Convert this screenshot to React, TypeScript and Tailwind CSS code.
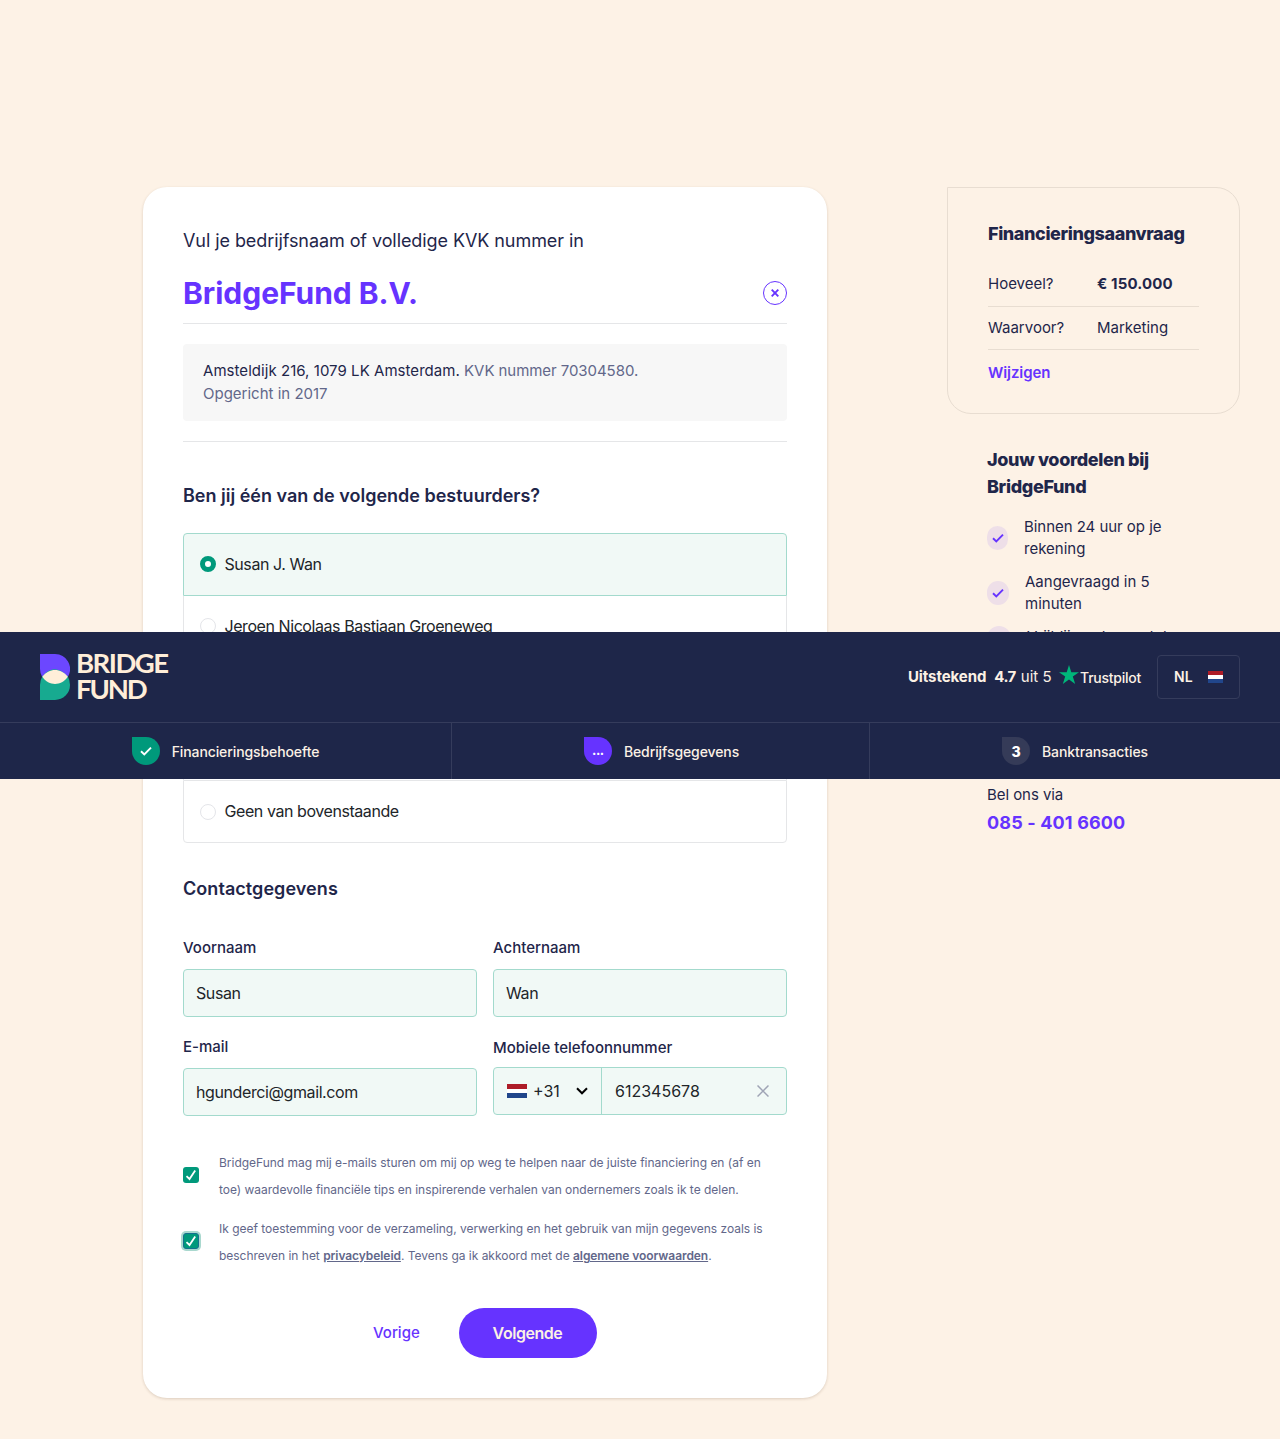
import { type ReactNode } from "react";
import clsx from "clsx";

function T({ c, children }: { c?: string; children: ReactNode }) {
  return <span className={clsx("whitespace-nowrap", c)}>{children}</span>;
}

function Tick({ c }: { c: string }) {
  return (
    <svg viewBox="0 0 12 10" className={c} fill="none" stroke="currentColor" strokeWidth="1.9">
      <path d="M1 5.2 4.3 8.4 11 1.6" />
    </svg>
  );
}

function Flag({ c }: { c: string }) {
  return (
    <span className={clsx("flex flex-col bg-white", c)}>
      <span className="flex-1 bg-[#ae1c28]" />
      <span className="flex-1" />
      <span className="flex-1 bg-[#21468b]" />
    </span>
  );
}

function Logo() {
  return (
    <div className="flex items-start gap-[6px]">
      <svg width="30" height="46" viewBox="0 0 30 46" className="mt-[22px]">
        <path d="M0 0H15A15 15 0 0 1 28 22.500Q14 38 2 22.500Q0 19 0 15Z" fill="#6c47ff" />
        <path d="M0 46V31Q0 26 2.300 22.500Q14 8 27.800 22.500Q30 26 30 31A15 15 0 0 1 15 46Z" fill="#17aa90" />
        <path d="M2.300 22.700C9 13.700 21 13.700 27.800 22.700C21 32.300 9 32.300 2.300 22.700Z" fill="#ffeed9" />
      </svg>
      <div className="mt-[18px] flex flex-col font-['Lato'] text-[27.500px] font-bold leading-[26px] text-[#ffeed9]">
        <T c="tracking-[-1.500px]">BRIDGE</T>
        <T c="tracking-[-2.100px]">FUND</T>
      </div>
    </div>
  );
}

function Step({ c, drop, mark, children }: { c: string; drop: string; mark: ReactNode; children: ReactNode }) {
  return (
    <div className={clsx("flex h-full items-start justify-center pt-[14px]", c)}>
      <div className={clsx("flex size-7 items-center justify-center rounded-full rounded-tl-none text-white", drop)}>{mark}</div>
      <div className="ml-3 pt-[4px] text-[14px] font-medium leading-[21px] tracking-[-0.1px] text-[#fcf1e5]"><T>{children}</T></div>
    </div>
  );
}

function Header() {
  return (
    <header className="fixed inset-x-0 top-[632px] z-10 h-[147px] bg-[#1e2649]">
      <div className="flex h-[90px] justify-between px-10">
        <Logo />
        <div className="flex items-start pt-[23px] text-[15px] leading-[22px] text-[#fcf1e5]">
          <div className="mt-[11px] flex">
            <T c="font-bold tracking-[-0.08px]">Uitstekend</T>
            <T c="ml-2 font-bold tracking-[-0.5px]">4.7</T>
            <T c="ml-[5px]">uit 5</T>
            <svg width="20" height="19" viewBox="0 0 20 19" className="-mt-px ml-[7.500px]">
              <path d="M10 0l2.300 7.200H20l-6.200 4.400L16.200 19 10 14.400 3.800 19l2.400-7.400L0 7.200h7.700z" fill="#00b67a" />
            </svg>
            <T c="ml-[1px] pt-px text-[14px] font-medium tracking-[-0.250px]">Trustpilot</T>
          </div>
          <div className="ml-4 flex h-11 w-[83px] items-center justify-between rounded border border-[#353c5c] px-4">
            <T c="text-[14px] font-semibold">NL</T>
            <Flag c="h-3 w-[15px]" />
          </div>
        </div>
      </div>
      <div className="flex h-[57px] border-t border-[#353c5c]">
        <Step c="w-[452px] border-r border-[#353c5c]" drop="bg-[#00997b]" mark={<Tick c="h-[10px] w-3" />}>Financieringsbehoefte</Step>
        <Step c="w-[418px] border-r border-[#353c5c] pl-[2px] tracking-[-0.15px]" drop="bg-[#6633ff]" mark={<span className="text-[13px] font-bold tracking-[-0.4px]">...</span>}>Bedrijfsgegevens</Step>
        <Step c="w-[410px]" drop="bg-[#353b58]" mark={<span className="text-[14px] font-extrabold">3</span>}>Banktransacties</Step>
      </div>
    </header>
  );
}

function Radio({ on }: { on?: boolean }) {
  return <span className={clsx("size-4 shrink-0 rounded-full bg-white", on ? "border-[5px] border-[#00997b]" : "border border-[#e4e5e9]")} />;
}

function Option({ on, c, t, children }: { on?: boolean; c: string; t?: string; children: ReactNode }) {
  return (
    <div className={clsx("flex items-center gap-[8.500px] px-4 text-[16px] leading-6 tracking-[-0.430px] text-[#212529]", c)}>
      <Radio on={on} />
      <T c={t}>{children}</T>
    </div>
  );
}

const field = "flex h-12 items-center rounded border border-[#a3dacd] bg-[#f1f9f6] text-[16px] leading-6 text-[#212529]";

function Field({ label, value }: { label: string; value: string }) {
  return (
    <label className="flex flex-col">
      <span className="mb-[10px] text-[15px] font-medium leading-[22px] text-[#1f264a]"><T>{label}</T></span>
      <span className={clsx(field, "px-3 tracking-[-0.4px]")}><T>{value}</T></span>
    </label>
  );
}

function Check({ focus }: { focus?: boolean }) {
  return (
    <span className={clsx("mt-[18px] flex size-4 shrink-0 items-center justify-center rounded-[3px] bg-[#00997b] text-white", focus && "border border-[#16708f] ring-2 ring-[#a9d8ce]")}>
      <svg width="12" height="12" viewBox="0 0 12 12" className="shrink-0" fill="none" stroke="currentColor" strokeWidth="1.800">
        <path d="M1.500 7.200 4.500 10 10.200 1.500" />
      </svg>
    </span>
  );
}

function Card() {
  return (
    <main className="h-[1211px] w-[684px] rounded-[24px] bg-white px-10 pt-10 text-[#1f264a] shadow-[0_1px_3px_rgba(90,60,30,0.2)]">
      <div className="text-[18px] leading-[27px] tracking-[-0.075px]"><T>Vul je bedrijfsnaam of volledige KVK nummer in</T></div>
      <div className="flex h-[70px] items-center justify-between border-b border-[#e5e6e8] pt-[9px]">
        <h1 className="-mt-px text-[30px] font-bold leading-[38px] tracking-[-0.030px] text-[#6633ff]"><T>BridgeFund B.V.</T></h1>
        <span className="flex size-6 items-center justify-center rounded-full border border-[#6633ff] text-[#6633ff]">
          <svg width="8" height="8" viewBox="0 0 8 8" stroke="currentColor" strokeWidth="1.900"><path d="M.7.7 7.300 7.300M7.300.7.7 7.300" /></svg>
        </span>
      </div>
      <div className="mt-5 h-[77px] rounded bg-[#f7f7f7] px-5 pt-[15px] text-[15px] leading-[23px] text-[#62678a]">
        <div><T c="tracking-[0.045px] text-[#1f264a]">Amsteldijk 216, 1079 LK Amsterdam.</T> <T c="tracking-[-0.060px]">KVK nummer 70304580.</T></div>
        <div><T>Opgericht in 2017</T></div>
      </div>
      <div className="mt-5 border-t border-[#e5e6e8] pt-10">
        <h2 className="text-[18px] font-semibold leading-[27px]"><T>Ben jij één van de volgende bestuurders?</T></h2>
      </div>
      <div className="mt-6">
        <Option on c="h-[63px] rounded-t border border-[#a3dacd] bg-[#f1f9f6] pb-px">Susan J. Wan</Option>
        <Option c="h-[61px] border-x border-b border-[#e5e6e8]">Jeroen Nicolaas Bastiaan Groeneweg</Option>
        <div className="h-[123px] border-x border-[#e5e6e8]" />
        <Option c="h-[63px] rounded-b border border-[#e5e6e8]" t="pb-px">Geen van bovenstaande</Option>
      </div>
      <h2 className="mt-8 text-[18px] font-semibold leading-[27px] tracking-[0.060px]"><T>Contactgegevens</T></h2>
      <div className="mt-[35px] grid grid-cols-2 gap-x-4 gap-y-[19px]">
        <Field label="Voornaam" value="Susan" />
        <Field label="Achternaam" value="Wan" />
        <Field label="E-mail" value="hgunderci@gmail.com" />
        <div>
          <div className="mb-[8px] pt-px text-[15px] font-medium leading-[22px]"><T>Mobiele telefoonnummer</T></div>
          <div className={field}>
            <div className="flex h-full w-[108px] items-center border-r border-[#a3dacd] pl-[13px]">
              <Flag c="h-[14px] w-5" />
              <T c="ml-[6px]">+31</T>
              <svg width="12" height="8" viewBox="0 0 12 8" className="ml-4" fill="none" stroke="#000" strokeWidth="2"><path d="M1 1.300 6 6.300 11 1.300" /></svg>
            </div>
            <T c="ml-[13px]">612345678</T>
            <svg width="12" height="12" viewBox="0 0 12 12" className="ml-auto mr-[17px]" stroke="#9fa4b5" strokeWidth="1.500"><path d="M.5.5l11 11M11.500.5l-11 11" /></svg>
          </div>
        </div>
      </div>
      <div className="mt-[33px] flex flex-col gap-3 text-[12px] leading-[27px] tracking-[-0.018px] text-[#62678a]">
        <div className="flex gap-5">
          <Check />
          <div>
            <div><T>BridgeFund mag mij e-mails sturen om mij op weg te helpen naar de juiste financiering en (af en</T></div>
            <div><T>toe) waardevolle financiële tips en inspirerende verhalen van ondernemers zoals ik te delen.</T></div>
          </div>
        </div>
        <div className="flex gap-5">
          <Check focus />
          <div>
            <div><T>Ik geef toestemming voor de verzameling, verwerking en het gebruik van mijn gegevens zoals is</T></div>
            <div><T>beschreven in het</T> <T c="font-semibold tracking-[-0.070px] underline">privacybeleid</T><T>. Tevens ga ik akkoord met de</T> <T c="font-semibold tracking-[-0.070px] underline">algemene voorwaarden</T>.</div>
          </div>
        </div>
      </div>
      <div className="mt-[39px] flex items-center pl-[190px]">
        <span className="text-[15px] font-medium text-[#6633ff]"><T>Vorige</T></span>
        <button className="ml-auto mr-[190px] h-[50px] w-[138px] rounded-full bg-[#6633ff] pr-px text-[16px] font-semibold tracking-[-0.450px] text-[#fcf1e5]"><T>Volgende</T></button>
      </div>
    </main>
  );
}

function Benefit({ w, children }: { w: string; children: ReactNode }) {
  return (
    <li className="flex items-center gap-4">
      <span className={clsx("flex h-6 shrink-0 items-center justify-center rounded-full bg-[#eedfe8] text-[#6633ff]", w)}><Tick c="h-[10px] w-3" /></span>
      <span className="flex flex-col">{children}</span>
    </li>
  );
}

function Sidebar() {
  return (
    <aside className="flex w-[293px] flex-col text-[15px] leading-[22px] text-[#1f264a]">
      <section className="h-[227px] rounded-[24px] rounded-tl-none border border-[#e8ddd1] px-10 pt-8">
        <h2 className="text-[18px] font-extrabold leading-[27px] tracking-[-0.400px]"><T>Financieringsaanvraag</T></h2>
        <div className="mt-[13px] grid h-[47px] grid-cols-[109px_1fr] items-center border-b border-[#e8ddd1] pt-px"><T>Hoeveel?</T><T c="font-bold tracking-[0.150px]">€ 150.000</T></div>
        <div className="grid h-[43px] grid-cols-[109px_1fr] items-center border-b border-[#e8ddd1]"><T>Waarvoor?</T><T>Marketing</T></div>
        <div className="mt-[12px] font-semibold tracking-[-0.080px] text-[#6633ff]"><T>Wijzigen</T></div>
      </section>
      <section className="mt-8 pl-10">
        <h2 className="flex flex-col text-[18px] font-extrabold leading-[27px] tracking-[-0.350px]"><T>Jouw voordelen bij</T><T>BridgeFund</T></h2>
        <ul className="mt-4 flex h-[268px] flex-col gap-[11px]">
          <Benefit w="w-[21px]"><T c="tracking-[-0.040px]">Binnen 24 uur op je</T><T>rekening</T></Benefit>
          <Benefit w="w-[22px]"><T>Aangevraagd in 5</T><T>minuten</T></Benefit>
          <Benefit w="w-6"><T c="pb-[2px]">Vrijblijvend voorstel</T></Benefit>
        </ul>
        <div className="tracking-[-0.060px]"><T>Bel ons via</T></div>
        <div className="mt-[3px] text-[18px] font-bold leading-[27px] tracking-[0.150px] text-[#6633ff]"><T>085 - 401 6600</T></div>
      </section>
    </aside>
  );
}

export default function App() {
  return (
    <div className="h-[1439px] overflow-hidden bg-[#fdf2e6] font-['Inter',sans-serif]">
      <Header />
      <div className="flex items-start gap-[120px] pl-[143px] pt-[187px]">
        <Card />
        <Sidebar />
      </div>
    </div>
  );
}
